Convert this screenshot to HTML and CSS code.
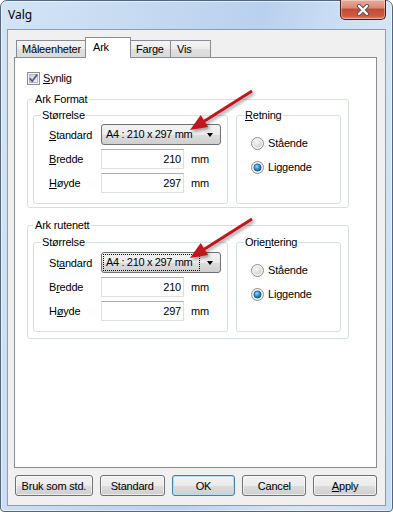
FILE: index.html
```html
<!DOCTYPE html>
<html lang="no">
<head>
  <meta charset="UTF-8">
  <title>Valg</title>
  <link rel="stylesheet" href="styles.css">
</head>
<body>

<div class="window">
  <div class="titlebar">
    <div class="title">Valg</div>
    <button class="close-btn">
      <svg width="14" height="12" viewBox="0 0 14 12">
        <path d="M3 2 L11 10 M11 2 L3 10" stroke="#5a5a5a" stroke-width="4.2" stroke-linecap="round"/>
        <path d="M3 2 L11 10 M11 2 L3 10" stroke="#fff" stroke-width="2.2" stroke-linecap="round"/>
      </svg>
    </button>
  </div>

  <div class="client">
    <div class="tabs">
      <div class="tab tab-units">Måleenheter</div>
      <div class="tab active">Ark</div>
      <div class="tab tab-color">Farge</div>
      <div class="tab tab-view">Vis</div>
    </div>

    <div class="tab-panel">
      <label class="check">
        <svg class="checkbox" width="13" height="13" viewBox="0 0 13 13">
          <defs>
            <linearGradient id="cbFill" x1="0" y1="0" x2="1" y2="1">
              <stop offset="0" stop-color="#cfcfcf"/>
              <stop offset="1" stop-color="#f4f4f4"/>
            </linearGradient>
          </defs>
          <rect x="0.5" y="0.5" width="12" height="12" fill="#f4f4f4" stroke="#8e8f8f"/>
          <rect x="2.5" y="2.5" width="8" height="8" fill="url(#cbFill)" stroke="#b9b9b9"/>
          <path d="M2.8 6.4 L5.2 9.2 L10.2 2.6" fill="none" stroke="#3d57a0" stroke-width="1.7"/>
        </svg>
        <span><u>S</u>ynlig</span>
      </label>

      <fieldset class="group outer">
        <legend>Ark Format</legend>
        <div class="group-row">
          <fieldset class="group size">
            <legend>Størrelse</legend>
            <div class="form-grid">
              <span><u>S</u>tandard</span>
              <div class="combo">
                <span class="combo-text">A4 : 210 x 297 mm</span>
                <span class="combo-arrow"></span>
              </div>
              <span><u>B</u>redde</span>
              <div class="input">210</div>
              <span class="unit">mm</span>
              <span><u>H</u>øyde</span>
              <div class="input">297</div>
              <span class="unit">mm</span>
            </div>
          </fieldset>
          <fieldset class="group orient">
            <legend><u>R</u>etning</legend>
            <div class="radio-list">
              <label class="radio">
                <svg width="13" height="13" viewBox="0 0 13 13"><use href="#radioOff"/></svg>
                <span>Stående</span>
              </label>
              <label class="radio">
                <svg width="13" height="13" viewBox="0 0 13 13"><use href="#radioOn"/></svg>
                <span>Liggende</span>
              </label>
            </div>
          </fieldset>
        </div>
      </fieldset>

      <fieldset class="group outer outer-grid">
        <legend>Ark rutenett</legend>
        <div class="group-row">
          <fieldset class="group size">
            <legend>Størrelse</legend>
            <div class="form-grid">
              <span>St<u>a</u>ndard</span>
              <div class="combo">
                <span class="combo-text focus">A4 : 210 x 297 mm</span>
                <span class="combo-arrow"></span>
              </div>
              <span>B<u>r</u>edde</span>
              <div class="input">210</div>
              <span class="unit">mm</span>
              <span>H<u>ø</u>yde</span>
              <div class="input">297</div>
              <span class="unit">mm</span>
            </div>
          </fieldset>
          <fieldset class="group orient">
            <legend>Orie<u>n</u>tering</legend>
            <div class="radio-list">
              <label class="radio">
                <svg width="13" height="13" viewBox="0 0 13 13"><use href="#radioOff"/></svg>
                <span>Stående</span>
              </label>
              <label class="radio">
                <svg width="13" height="13" viewBox="0 0 13 13"><use href="#radioOn"/></svg>
                <span>Liggende</span>
              </label>
            </div>
          </fieldset>
        </div>
      </fieldset>
    </div>

    <div class="button-row">
      <button class="btn btn-wide">Bruk som std.</button>
      <button class="btn btn-std">Standard</button>
      <button class="btn btn-default">OK</button>
      <button class="btn">Cancel</button>
      <button class="btn"><u>A</u>pply</button>
    </div>
  </div>

  <!-- red callout arrows drawn on top of the dialog -->
  <svg class="arrows" width="393" height="512" viewBox="0 0 393 512">
    <defs>
      <filter id="shadow" x="-20%" y="-20%" width="140%" height="140%">
        <feDropShadow dx="2" dy="2" stdDeviation="1.4" flood-color="#000" flood-opacity="0.35"/>
      </filter>
      <g id="arrow">
        <line x1="252" y1="91" x2="203" y2="122" stroke="#c0141e" stroke-width="3"/>
        <polygon points="190,130 200.7,115 208.1,126.9" fill="#c0141e"/>
      </g>
    </defs>
    <use href="#arrow" filter="url(#shadow)"/>
    <use href="#arrow" transform="translate(0,128)" filter="url(#shadow)"/>
  </svg>

  <svg class="defs" width="0" height="0">
    <defs>
      <radialGradient id="rbFill" cx="0.4" cy="0.35" r="0.7">
        <stop offset="0" stop-color="#fbfbfb"/>
        <stop offset="1" stop-color="#cfcfcf"/>
      </radialGradient>
      <radialGradient id="rbDot" cx="0.4" cy="0.35" r="0.7">
        <stop offset="0" stop-color="#8fdcff"/>
        <stop offset="0.55" stop-color="#2a8ed0"/>
        <stop offset="1" stop-color="#17508f"/>
      </radialGradient>
      <g id="radioOff">
        <circle cx="6.5" cy="6.5" r="6" fill="#f2f2f2" stroke="#8e8f8f"/>
        <circle cx="6.5" cy="6.5" r="4" fill="url(#rbFill)"/>
      </g>
      <g id="radioOn">
        <circle cx="6.5" cy="6.5" r="6" fill="#f2f2f2" stroke="#8e8f8f"/>
        <circle cx="6.5" cy="6.5" r="3.6" fill="url(#rbDot)" stroke="#1d4f86" stroke-width="0.8"/>
      </g>
    </defs>
  </svg>
</div>

</body>
</html>
```

FILE: styles.css
```css
* {
  margin: 0;
  padding: 0;
  box-sizing: border-box;
}

body {
  width: 393px;
  height: 512px;
  overflow: hidden;
  background-color: #fff;
  font-family: "Liberation Sans", Arial, sans-serif;
  font-size: 11px;
  letter-spacing: -0.2px;
  color: #000;
}

u {
  text-decoration-thickness: 1px;
  text-underline-offset: 1px;
}

.window {
  position: relative;
  width: 393px;
  height: 512px;
  display: flex;
  flex-direction: column;
  border: 1px solid #55667c;
  border-radius: 7px 7px 4px 4px;
  background: linear-gradient(100deg, #d3e4f6 0%, #c3d8f0 35%, #b9d1ee 55%, #d5e5f6 80%, #c8dcf2 100%);
  box-shadow: inset 0 0 0 1px rgba(255, 255, 255, 0.55);
}

.titlebar {
  height: 28px;
  flex-shrink: 0;
  display: flex;
  justify-content: space-between;
  align-items: flex-start;
}

.title {
  font-family: "Noto Sans", "Liberation Sans", sans-serif;
  font-size: 12px;
  letter-spacing: 0;
  line-height: 16px;
  padding: 6px 0 0 7px;
}

.close-btn {
  width: 46px;
  height: 20px;
  margin: -1px 6px 0 0;
  display: flex;
  align-items: center;
  justify-content: center;
  border: 1px solid #4a1d18;
  border-top: none;
  border-radius: 0 0 5px 5px;
  background: linear-gradient(#e9ab9c, #d98a77 40%, #c44a33 50%, #cd5c41 85%, #e08a6c 100%);
  box-shadow: inset 0 0 0 1px rgba(255, 255, 255, 0.35);
}

.client {
  flex: 1;
  margin: 0 6px 5px 6px;
  padding: 7px 8px 9px 6px;
  display: flex;
  flex-direction: column;
  border: 1px solid #8b9db3;
  background-color: #f0f0f0;
}

/* tabs */

.tabs {
  height: 21px;
  margin-bottom: -1px;
  padding-left: 2px;
  display: flex;
  align-items: flex-start;
  position: relative;
  z-index: 1;
}

.tab {
  height: 17px;
  margin-top: 3px;
  margin-left: -1px;
  padding-left: 5px;
  line-height: 16px;
  border: 1px solid #898c95;
  border-bottom: none;
  background: linear-gradient(#f4f4f4, #ececec 50%, #e0e0e0 51%, #dadada);
}

.tab-units {
  width: 70px;
  margin-left: 0;
}

.tab-color {
  width: 41px;
}

.tab-view {
  width: 41px;
  padding-left: 6px;
}

.tab.active {
  width: 46px;
  height: 21px;
  margin-top: 0;
  padding-left: 7px;
  line-height: 19px;
  background: #fff;
}

.tab-panel {
  flex: 1;
  padding: 14px 12px 0 12px;
  border: 1px solid #898c95;
  background-color: #fff;
}

/* checkbox */

.check {
  height: 13px;
  display: flex;
  align-items: center;
  gap: 3px;
  line-height: 13px;
}

.checkbox {
  display: block;
}

/* group boxes */

.group {
  border: 1px solid #d5dfe5;
  border-radius: 3px;
}

.group legend {
  padding: 0 2px;
  line-height: 13px;
}

.outer {
  width: 322px;
  margin-top: 8px;
  padding: 3px 7px 3px 5px;
}

.outer-grid {
  margin-top: 11px;
  padding: 4px 7px 6px 5px;
}

.group-row {
  display: flex;
  gap: 8px;
}

.size {
  width: 195px;
  padding: 2px 6px 10px 15px;
}

.outer-grid .size {
  padding-top: 3px;
}

.size legend {
  margin-left: -8px;
  padding: 0 1px;
}

.orient {
  width: 105px;
  padding: 15px 6px 0 14px;
}

.orient legend {
  margin-left: -7px;
  padding: 0 1px;
}

.form-grid {
  display: grid;
  grid-template-columns: 52px 83px auto;
  row-gap: 4px;
  align-items: center;
}

.combo {
  grid-column: span 2;
  width: 120px;
  height: 21px;
  padding: 1px;
  display: flex;
  border: 1px solid #707070;
  border-radius: 3px;
  background: linear-gradient(#f2f2f2, #ebebeb 50%, #dddddd 51%, #cfcfcf);
}

.combo-text {
  flex: 1;
  padding-left: 2px;
  line-height: 15px;
  letter-spacing: -0.35px;
  border: 1px dotted transparent;
  white-space: nowrap;
}

.combo-text.focus {
  border-color: #000;
}

.combo-arrow {
  width: 19px;
  position: relative;
}

.combo-arrow::after {
  content: "";
  position: absolute;
  left: 7px;
  top: 7px;
  border-top: 4px solid #000;
  border-left: 3.5px solid transparent;
  border-right: 3.5px solid transparent;
}

.input {
  height: 20px;
  padding-right: 2px;
  line-height: 18px;
  text-align: right;
  border: 1px solid #dbdfe6;
  border-top-color: #abadb3;
  border-left-color: #e2e3ea;
  background-color: #fff;
}

.unit {
  margin-left: 7px;
}

.radio-list {
  display: flex;
  flex-direction: column;
  gap: 11px;
}

.radio {
  height: 13px;
  display: flex;
  align-items: center;
  gap: 4px;
  line-height: 13px;
}

.radio svg {
  display: block;
}

/* dialog buttons */

.button-row {
  height: 21px;
  margin: 7px 0 0 1px;
  display: flex;
  gap: 7px;
}

.btn {
  width: 64px;
  height: 21px;
  font-family: inherit;
  font-size: 11px;
  letter-spacing: inherit;
  color: #000;
  border: 1px solid #707070;
  border-radius: 3px;
  background: linear-gradient(#f2f2f2, #ebebeb 50%, #dddddd 51%, #cfcfcf);
  box-shadow: inset 0 0 0 1px rgba(255, 255, 255, 0.6);
}

.btn-wide {
  width: 78px;
}

.btn-std {
  width: 65px;
}

.btn-default {
  border-color: #3c7fb1;
  box-shadow: inset 0 0 0 1px #b6def5;
}

.arrows {
  position: absolute;
  left: -1px;
  top: -1px;
  pointer-events: none;
}

.defs {
  position: absolute;
}
```
